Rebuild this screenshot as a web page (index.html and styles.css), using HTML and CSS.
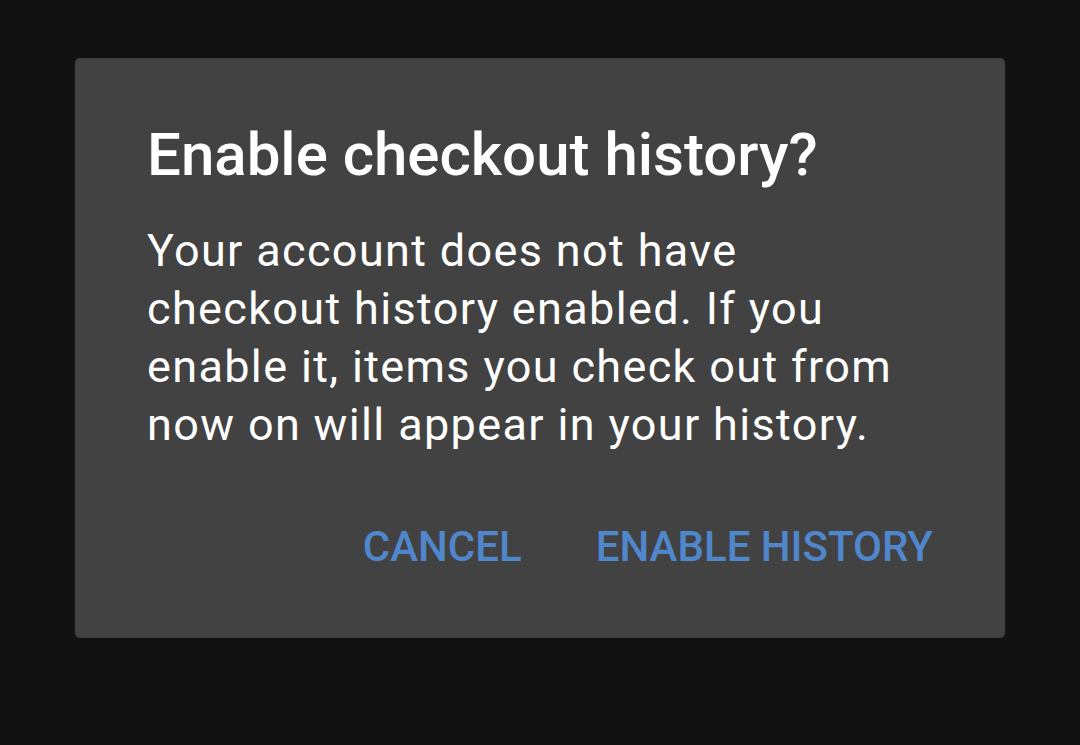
FILE: index.html
```html
<!DOCTYPE html>
<html lang="en">
<head>
<meta charset="utf-8">
<title>Enable checkout history?</title>
<link rel="stylesheet" href="styles.css">
</head>
<body>
<div class="scrim">
  <div class="dialog" role="dialog" aria-labelledby="dlg-title">
    <h1 class="dialog-title" id="dlg-title">Enable checkout history?</h1>
    <p class="dialog-body">Your account does not have checkout history enabled. If you enable it, items you check out from now on will appear in your history.</p>
    <div class="dialog-actions">
      <button class="dialog-btn">Cancel</button>
      <button class="dialog-btn">Enable history</button>
    </div>
  </div>
</div>
</body>
</html>
```
FILE: styles.css
```css
html, body {
  margin: 0;
  padding: 0;
  background: #121212;
  height: 100%;
}
body {
  font-family: Roboto, "Noto Sans", "Liberation Sans", sans-serif;
  -webkit-font-smoothing: antialiased;
}
.scrim {
  padding: 58px 75px 0 75px;
}
.dialog {
  background: #424242;
  border-radius: 5px;
  height: 580px;
  box-sizing: border-box;
  padding: 61px 72px 0 72px;
  display: flex;
  flex-direction: column;
}
.dialog-title {
  margin: 0;
  font-size: 60px;
  font-weight: 500;
  line-height: 72px;
  color: #ffffff;
}
.dialog-body {
  margin: 31px 0 0 0;
  font-size: 45px;
  font-weight: 400;
  letter-spacing: 1.35px;
  line-height: 58px;
  color: #ffffff;
}
.dialog-actions {
  margin-top: 69px;
  display: flex;
  justify-content: flex-end;
  gap: 74px;
}
.dialog-btn {
  background: none;
  border: none;
  padding: 0;
  font-family: inherit;
  font-size: 42px;
  font-weight: 500;
  line-height: 48px;
  text-transform: uppercase;
  color: #5086cc;
  cursor: pointer;
}
```
